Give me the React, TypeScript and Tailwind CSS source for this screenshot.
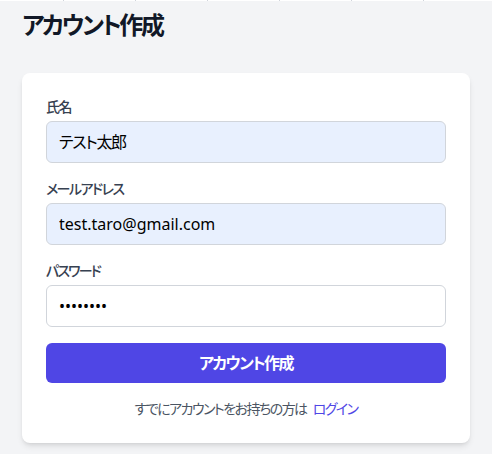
import React from 'react';

const font = { fontFamily: '"Noto Sans", "Noto Sans CJK JP", sans-serif' };

const App: React.FC = () => {
  return (
    <div className="min-h-screen bg-gray-100 [font-feature-settings:'palt']" style={font}>
      {/* remnant of the row above */}
      <div className="flex h-px bg-white pl-[63px]">
        {Array.from({ length: 6 }).map((_, i) => (
          <div key={i} className="w-[72px] shrink-0 border-l border-gray-300" />
        ))}
      </div>

      <div className="mx-auto max-w-md pt-2">
        <h1 className="mb-8 text-2xl font-bold tracking-[-0.1em] text-[#111827]">アカウント作成</h1>

        <form className="rounded-lg bg-white p-6 shadow-md" onSubmit={(e) => e.preventDefault()}>
          <div className="mb-4">
            <label className="mb-1 block text-sm font-medium tracking-[-0.1em] text-[#374151]">氏名</label>
            <input
              type="text"
              readOnly
              value="テスト太郎"
              className="w-full rounded-md border border-[#d1d5db] bg-[#e8f0fe] px-3 py-2 text-base tracking-[-0.08em] text-black outline-none"
            />
          </div>

          <div className="mb-4">
            <label className="mb-1 block text-sm font-medium tracking-[-0.11em] text-[#374151]">メールアドレス</label>
            <input
              type="email"
              readOnly
              value="test.taro@gmail.com"
              className="w-full rounded-md border border-[#d1d5db] bg-[#e8f0fe] px-3 py-2 text-base text-black outline-none"
            />
          </div>

          <div className="mb-4">
            <label className="mb-1 block text-sm font-medium tracking-[-0.13em] text-[#374151]">パスワード</label>
            <input
              type="password"
              readOnly
              value="password"
              className="w-full rounded-md border border-[#d1d5db] bg-white px-3 py-2 text-base text-black outline-none"
            />
          </div>

          <button
            type="submit"
            className="w-full rounded-md bg-[#4f46e5] py-2 text-base font-bold tracking-[-0.1em] text-white"
          >
            アカウント作成
          </button>

          <p className="mt-4 text-center text-sm tracking-[-0.11em] text-[#4b5563]">
            すでにアカウントをお持ちの方は<a className="ml-1.5 text-[#4f46e5]">ログイン</a>
          </p>
        </form>
      </div>
    </div>
  );
};

export default App;
